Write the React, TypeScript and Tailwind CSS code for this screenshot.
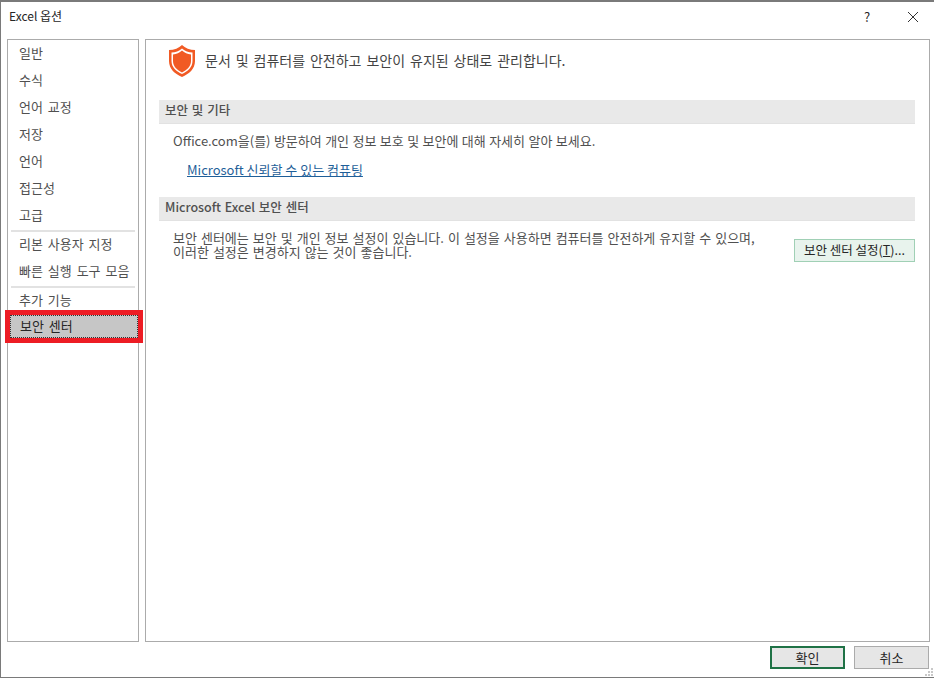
const font = { fontFamily: '"Noto Sans CJK KR", "Liberation Sans", sans-serif' };

function NavItem({ label, active }: { label: string; active?: boolean }) {
  return (
    <div
      className={
        active
          ? "relative h-[23px] ml-[2px] pl-[9px] pb-[1px] flex items-center bg-[#c6c6c6] border border-dotted border-[#333] text-[#262626] [word-spacing:2px]"
          : "h-[27px] pl-[11px] pb-[4px] flex items-center text-[#505050] [word-spacing:2px]"
      }
    >
      {label}
      {active && (
        <div className="absolute left-[-6px] right-[-6px] top-[-6px] bottom-[-6px] border-[5px] border-[#ed1c24]" />
      )}
    </div>
  );
}

function SectionHeader({ children }: { children: string }) {
  return (
    <div className="h-[24px] pl-[6px] pb-[2px] flex items-center bg-[#e9e9e9] border-b border-[#e2e2e2] text-[12.5px] font-medium text-[#505050] [word-spacing:1px]">
      {children}
    </div>
  );
}

export default function App() {
  return (
    <div
      className="relative w-[934px] h-[678px] bg-white text-[13px] text-[#505050] border-t-2 border-l border-b border-[#7a7a7a] overflow-hidden flex flex-col"
      style={font}
    >
      {/* title bar */}
      <div className="h-[37px] shrink-0 pl-[8px] flex items-center justify-between text-[#262626]">
        <span className="mb-[9px] text-[12px]">Excel 옵션</span>
        <div className="flex items-center mb-[8px] mr-[16px]">
          <span className="w-[10px] text-center text-[13px] mr-[36px]">?</span>
          <svg width="10" height="10" viewBox="0 0 10 10" fill="none" stroke="#333">
            <path d="M0 0l10 10M10 0L0 10" />
          </svg>
        </div>
      </div>

      <div className="shrink-0 flex gap-[6px] pl-[6px]">
        {/* sidebar */}
        <div className="w-[132px] h-[603px] border border-[#ababab] pt-[1px] flex flex-col">
          <NavItem label="일반" />
          <NavItem label="수식" />
          <NavItem label="언어 교정" />
          <NavItem label="저장" />
          <NavItem label="언어" />
          <NavItem label="접근성" />
          <NavItem label="고급" />
          <div className="h-[2px] mx-[3px] bg-[#e2e2e2]" />
          <NavItem label="리본 사용자 지정" />
          <NavItem label="빠른 실행 도구 모음" />
          <div className="h-[2px] mx-[3px] bg-[#e2e2e2]" />
          <NavItem label="추가 기능" />
          <NavItem label="보안 센터" active />
        </div>

        {/* content */}
        <div className="w-[785px] h-[603px] border border-[#ababab] pl-[13px] pr-[14px]">
          <div className="h-[40px] mb-[20px] flex items-center pl-[10px] text-[14px] text-[#444] [word-spacing:1.8px]">
            <svg width="26" height="32" viewBox="1 0 26 32" className="mr-[10px] mt-[2px] shrink-0">
              <path d="M14 0C11 3 6 5 1 5v11c0 8 6 13 13 16 7-3 13-8 13-16V5c-5 0-10-2-13-5z" fill="#f15a24" />
              <path d="M14 3.500C11 6 7.500 7.500 3.500 7.500V16c0 6.500 5 10.500 10.500 13 5.500-2.500 10.500-6.500 10.500-13V7.500c-4 0-7.500-1.500-10.500-4z" fill="#fff" />
              <path d="M14 5.500C11.500 7.700 8.500 9.200 5 9.400V16c0 5.500 4.300 9.200 9 11.400 4.700-2.200 9-5.900 9-11.400V9.400C19.500 9.200 16.500 7.700 14 5.500z" fill="#f15a24" />
            </svg>
            문서 및 컴퓨터를 안전하고 보안이 유지된 상태로 관리합니다.
          </div>
          <SectionHeader>보안 및 기타</SectionHeader>
          <div className="pl-[14px] h-[34px] flex items-center [word-spacing:0.5px]">Office.com을(를) 방문하여 개인 정보 보호 및 보안에 대해 자세히 알아 보세요.</div>
          <div className="pl-[28px] h-[24px] mb-[15px] flex items-center text-[#1f5f99]">
            <span className="underline">Microsoft 신뢰할 수 있는 컴퓨팅</span>
          </div>
          <SectionHeader>Microsoft Excel 보안 센터</SectionHeader>
          <div className="flex justify-between pl-[14px] pt-[10px]">
            <p className="leading-[14px] [word-spacing:1.1px]">
              보안 센터에는 보안 및 개인 정보 설정이 있습니다. 이 설정을 사용하면 컴퓨터를 안전하게 유지할 수 있으며,
              <br />
              이러한 설정은 변경하지 않는 것이 좋습니다.
            </p>
            <button className="w-[121px] h-[23px] mt-[8px] border border-[#a0d0b5] bg-[#e8f3ed] text-[#262626] text-[12.5px] whitespace-nowrap flex items-center justify-center">
              보안 센터 설정(<span className="underline">T</span>)...
            </button>
          </div>
        </div>
      </div>

      {/* footer */}
      <div className="flex-1 flex justify-end gap-[9px] pr-[5px] pt-[4px] text-[#262626]">
        <button className="w-[75px] h-[23px] border-2 border-[#1f7246] bg-[#e6e6e6] flex items-center justify-center">확인</button>
        <button className="w-[75px] h-[23px] border border-[#ababab] bg-[#e6e6e6] flex items-center justify-center">취소</button>
      </div>

      {/* resize grip */}
      <svg width="8" height="8" viewBox="0 0 8 8" fill="#c8c8c8" className="absolute right-[1px] bottom-[1px]">
        <rect x="6" y="0" width="2" height="2" />
        <rect x="3" y="3" width="2" height="2" />
        <rect x="6" y="3" width="2" height="2" />
        <rect x="0" y="6" width="2" height="2" />
        <rect x="3" y="6" width="2" height="2" />
        <rect x="6" y="6" width="2" height="2" />
      </svg>
    </div>
  );
}
